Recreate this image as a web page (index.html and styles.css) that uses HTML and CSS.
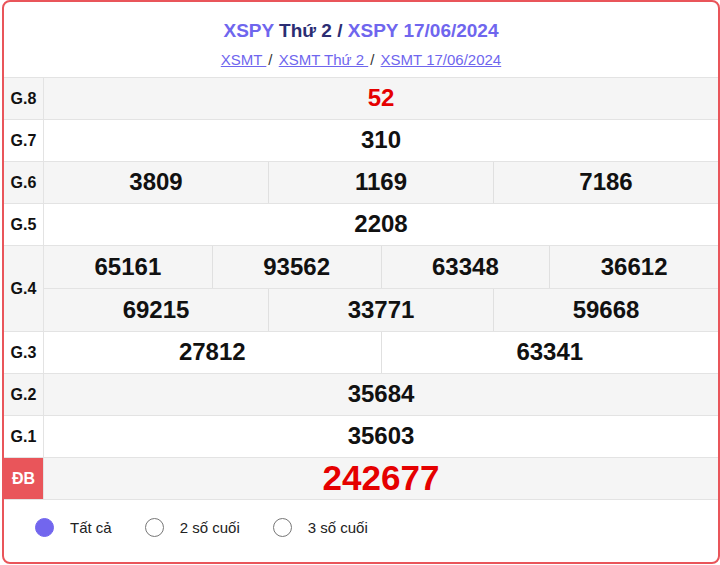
FILE: index.html
```html
<!DOCTYPE html>
<html lang="vi">
<head>
<meta charset="utf-8">
<link rel="stylesheet" href="styles.css">
</head>
<body>
<div class="box">
  <div class="head">
    <h2 class="title"><span class="hl">XSPY</span> Thứ 2 / <span class="hl">XSPY 17/06/2024</span></h2>
    <div class="crumbs"><a href="#">XSMT </a> / <a href="#">XSMT Thứ 2 </a> / <a href="#">XSMT 17/06/2024</a></div>
  </div>
  <div class="table">
    <div class="row alt"><div class="lbl">G.8</div><div class="vals"><div class="line"><div class="cell red">52</div></div></div></div>
    <div class="row"><div class="lbl">G.7</div><div class="vals"><div class="line"><div class="cell">310</div></div></div></div>
    <div class="row alt"><div class="lbl">G.6</div><div class="vals"><div class="line"><div class="cell">3809</div><div class="cell">1169</div><div class="cell">7186</div></div></div></div>
    <div class="row"><div class="lbl">G.5</div><div class="vals"><div class="line"><div class="cell">2208</div></div></div></div>
    <div class="row alt"><div class="lbl">G.4</div><div class="vals">
      <div class="line tall"><div class="cell">65161</div><div class="cell">93562</div><div class="cell">63348</div><div class="cell">36612</div></div>
      <div class="line tall"><div class="cell">69215</div><div class="cell">33771</div><div class="cell">59668</div></div>
    </div></div>
    <div class="row"><div class="lbl">G.3</div><div class="vals"><div class="line"><div class="cell">27812</div><div class="cell">63341</div></div></div></div>
    <div class="row alt"><div class="lbl">G.2</div><div class="vals"><div class="line"><div class="cell">35684</div></div></div></div>
    <div class="row"><div class="lbl">G.1</div><div class="vals"><div class="line"><div class="cell">35603</div></div></div></div>
    <div class="row alt last"><div class="lbl db">ĐB</div><div class="vals"><div class="line"><div class="cell red big">242677</div></div></div></div>
  </div>
  <div class="opts">
    <label class="opt"><span class="radio on"></span>Tất cả</label>
    <label class="opt"><span class="radio"></span>2 số cuối</label>
    <label class="opt"><span class="radio"></span>3 số cuối</label>
  </div>
</div>
</body>
</html>
```

FILE: styles.css
```css
html, body { margin: 0; padding: 0; background: #fff; }
body { font-family: "Liberation Sans", Arial, sans-serif; color: #111; }
.box {
  box-sizing: border-box;
  margin-left: 2px;
  width: 718px;
  height: 564px;
  border: 2px solid #e9555a;
  border-radius: 8px;
  overflow: hidden;
}
.head { text-align: center; padding-top: 17px; }
.title {
  margin: 0;
  font-size: 19px;
  line-height: 24px;
  font-weight: bold;
  color: #2b2d73;
}
.title .hl { color: #6f66ee; }
.crumbs {
  margin-top: 7px;
  font-size: 15px;
  line-height: 20px;
  color: #333;
  height: 20px;
}
.crumbs a { color: #6f66ee; text-decoration: underline; margin: 0 2px; }
.table { margin-top: 7px; }
.row { display: flex; border-top: 1px solid #e3e3e3; }
.row.last { border-bottom: 1px solid #e3e3e3; }
.row.alt { background: #f5f5f5; }
.lbl {
  width: 39px;
  border-right: 1px solid #e3e3e3;
  display: flex;
  align-items: center;
  justify-content: center;
  font-weight: bold;
  font-size: 16px;
  color: #111;
}
.lbl.db { background: #e9555a; color: #fff; }
.vals { flex: 1; display: flex; flex-direction: column; }
.line { display: flex; height: 41px; }
.line.tall { height: 42px; }
.line.tall + .line.tall { border-top: 1px solid #e3e3e3; }
.cell {
  flex: 1;
  display: flex;
  align-items: center;
  justify-content: center;
  font-weight: bold;
  font-size: 24px;
  color: #111;
  padding-bottom: 1px;
}
.cell + .cell { border-left: 1px solid #e0e0e0; }
.cell.red { color: #e50000; }
.cell.big { font-size: 35px; }
.opts {
  display: flex;
  align-items: center;
  height: 55px;
  padding-left: 31px;
  font-size: 15px;
  color: #222;
}
.opt { display: inline-flex; align-items: center; gap: 16px; margin-right: 33px; }
.radio {
  box-sizing: border-box;
  width: 19px;
  height: 19px;
  border-radius: 50%;
  border: 1px solid #777;
  background: #fff;
}
.radio.on { background: #7266ee; border-color: #7266ee; }
```
